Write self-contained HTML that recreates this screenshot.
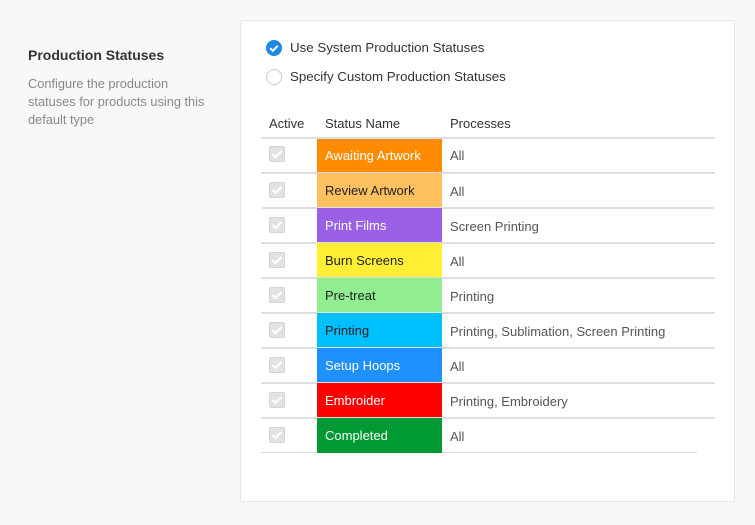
<!DOCTYPE html>
<html><head><style>
body{margin:0;width:755px;height:525px;background:#f8f8f8;font-family:"Liberation Sans",sans-serif;position:relative;overflow:hidden}
.card{position:absolute;left:240px;top:20px;width:495px;height:482px;background:#fff;border:1px solid #e6e6e6;border-radius:2px;box-sizing:border-box}
h3{position:absolute;left:28px;top:47px;margin:0;font-size:14px;font-weight:bold;color:#333}
.desc{position:absolute;left:28px;top:75px;white-space:nowrap;font-size:12.8px;line-height:18px;color:#888}
.opt{position:absolute;left:266px;font-size:13.3px;color:#333}
.opt span{position:absolute;left:24px;top:0;white-space:nowrap}
.rad{position:absolute;left:0;top:0;width:16px;height:16px;border-radius:50%;box-sizing:border-box}
.hd{position:absolute;top:116px;font-size:13px;color:#333}
.row{position:absolute;left:261px;width:454px;height:35px;border-top:2px solid #dedede;box-sizing:border-box}
.cb{position:absolute;left:8px;top:8px;width:16px;height:16px;background:#e2e2e2;border:1px solid #d4d4d4;box-sizing:border-box;border-radius:2px}
.sn{position:absolute;left:56px;top:-1px;width:125px;height:34px;font-size:13px;line-height:35px;padding-left:8px;box-sizing:border-box}
.pr{position:absolute;left:189px;top:0;font-size:13px;line-height:35px;color:#555}
</style></head><body>
<h3>Production Statuses</h3>
<div class="desc">Configure the production<br>statuses for products using this<br>default type</div>
<div class="card"></div>
<div class="opt" style="top:40px"><div class="rad" style="background:#1e88e5"><svg width="16" height="16"><path d="M4.2 8.2l2.6 2.6 5-5" stroke="#fff" stroke-width="2" fill="none"/></svg></div><span>Use System Production Statuses</span></div>
<div class="opt" style="top:69px"><div class="rad" style="border:1px solid #ccc"></div><span>Specify Custom Production Statuses</span></div>
<div class="hd" style="left:269px">Active</div>
<div class="hd" style="left:325px">Status Name</div>
<div class="hd" style="left:450px">Processes</div>
<div style="position:absolute;left:261px;top:137px;width:454px;height:2px;background:#dedede"></div>
<div style="position:absolute;left:261px;top:452px;width:436px;height:1px;background:#dedede"></div>
<svg width="0" height="0" style="position:absolute"><defs><path id="ck" d="M3.5 8l3 3 6-6" stroke="#fff" stroke-width="2" fill="none"/></defs></svg>
<div class="row" style="top:138px;border-top:0"><div class="cb"><svg width="14" height="14" viewBox="1 1 14 14"><use href="#ck"/></svg></div><div class="sn" style="background:#ff8c00;color:#fff;top:1px;height:34px;line-height:33px">Awaiting Artwork</div><div class="pr">All</div></div>
<div class="row" style="top:172px"><div class="cb"><svg width="14" height="14" viewBox="1 1 14 14"><use href="#ck"/></svg></div><div class="sn" style="background:#ffc060;color:#222">Review Artwork</div><div class="pr">All</div></div>
<div class="row" style="top:207px"><div class="cb"><svg width="14" height="14" viewBox="1 1 14 14"><use href="#ck"/></svg></div><div class="sn" style="background:#9a60e6;color:#fff">Print Films</div><div class="pr">Screen Printing</div></div>
<div class="row" style="top:242px"><div class="cb"><svg width="14" height="14" viewBox="1 1 14 14"><use href="#ck"/></svg></div><div class="sn" style="background:#ffee33;color:#222">Burn Screens</div><div class="pr">All</div></div>
<div class="row" style="top:277px"><div class="cb"><svg width="14" height="14" viewBox="1 1 14 14"><use href="#ck"/></svg></div><div class="sn" style="background:#90ee90;color:#222">Pre-treat</div><div class="pr">Printing</div></div>
<div class="row" style="top:312px"><div class="cb"><svg width="14" height="14" viewBox="1 1 14 14"><use href="#ck"/></svg></div><div class="sn" style="background:#00bfff;color:#222">Printing</div><div class="pr">Printing, Sublimation, Screen Printing</div></div>
<div class="row" style="top:347px"><div class="cb"><svg width="14" height="14" viewBox="1 1 14 14"><use href="#ck"/></svg></div><div class="sn" style="background:#1e90ff;color:#fff">Setup Hoops</div><div class="pr">All</div></div>
<div class="row" style="top:382px"><div class="cb"><svg width="14" height="14" viewBox="1 1 14 14"><use href="#ck"/></svg></div><div class="sn" style="background:#ff0000;color:#fff">Embroider</div><div class="pr">Printing, Embroidery</div></div>
<div class="row" style="top:417px"><div class="cb"><svg width="14" height="14" viewBox="1 1 14 14"><use href="#ck"/></svg></div><div class="sn" style="background:#009933;color:#fff;height:35px">Completed</div><div class="pr">All</div></div>
</body></html>
